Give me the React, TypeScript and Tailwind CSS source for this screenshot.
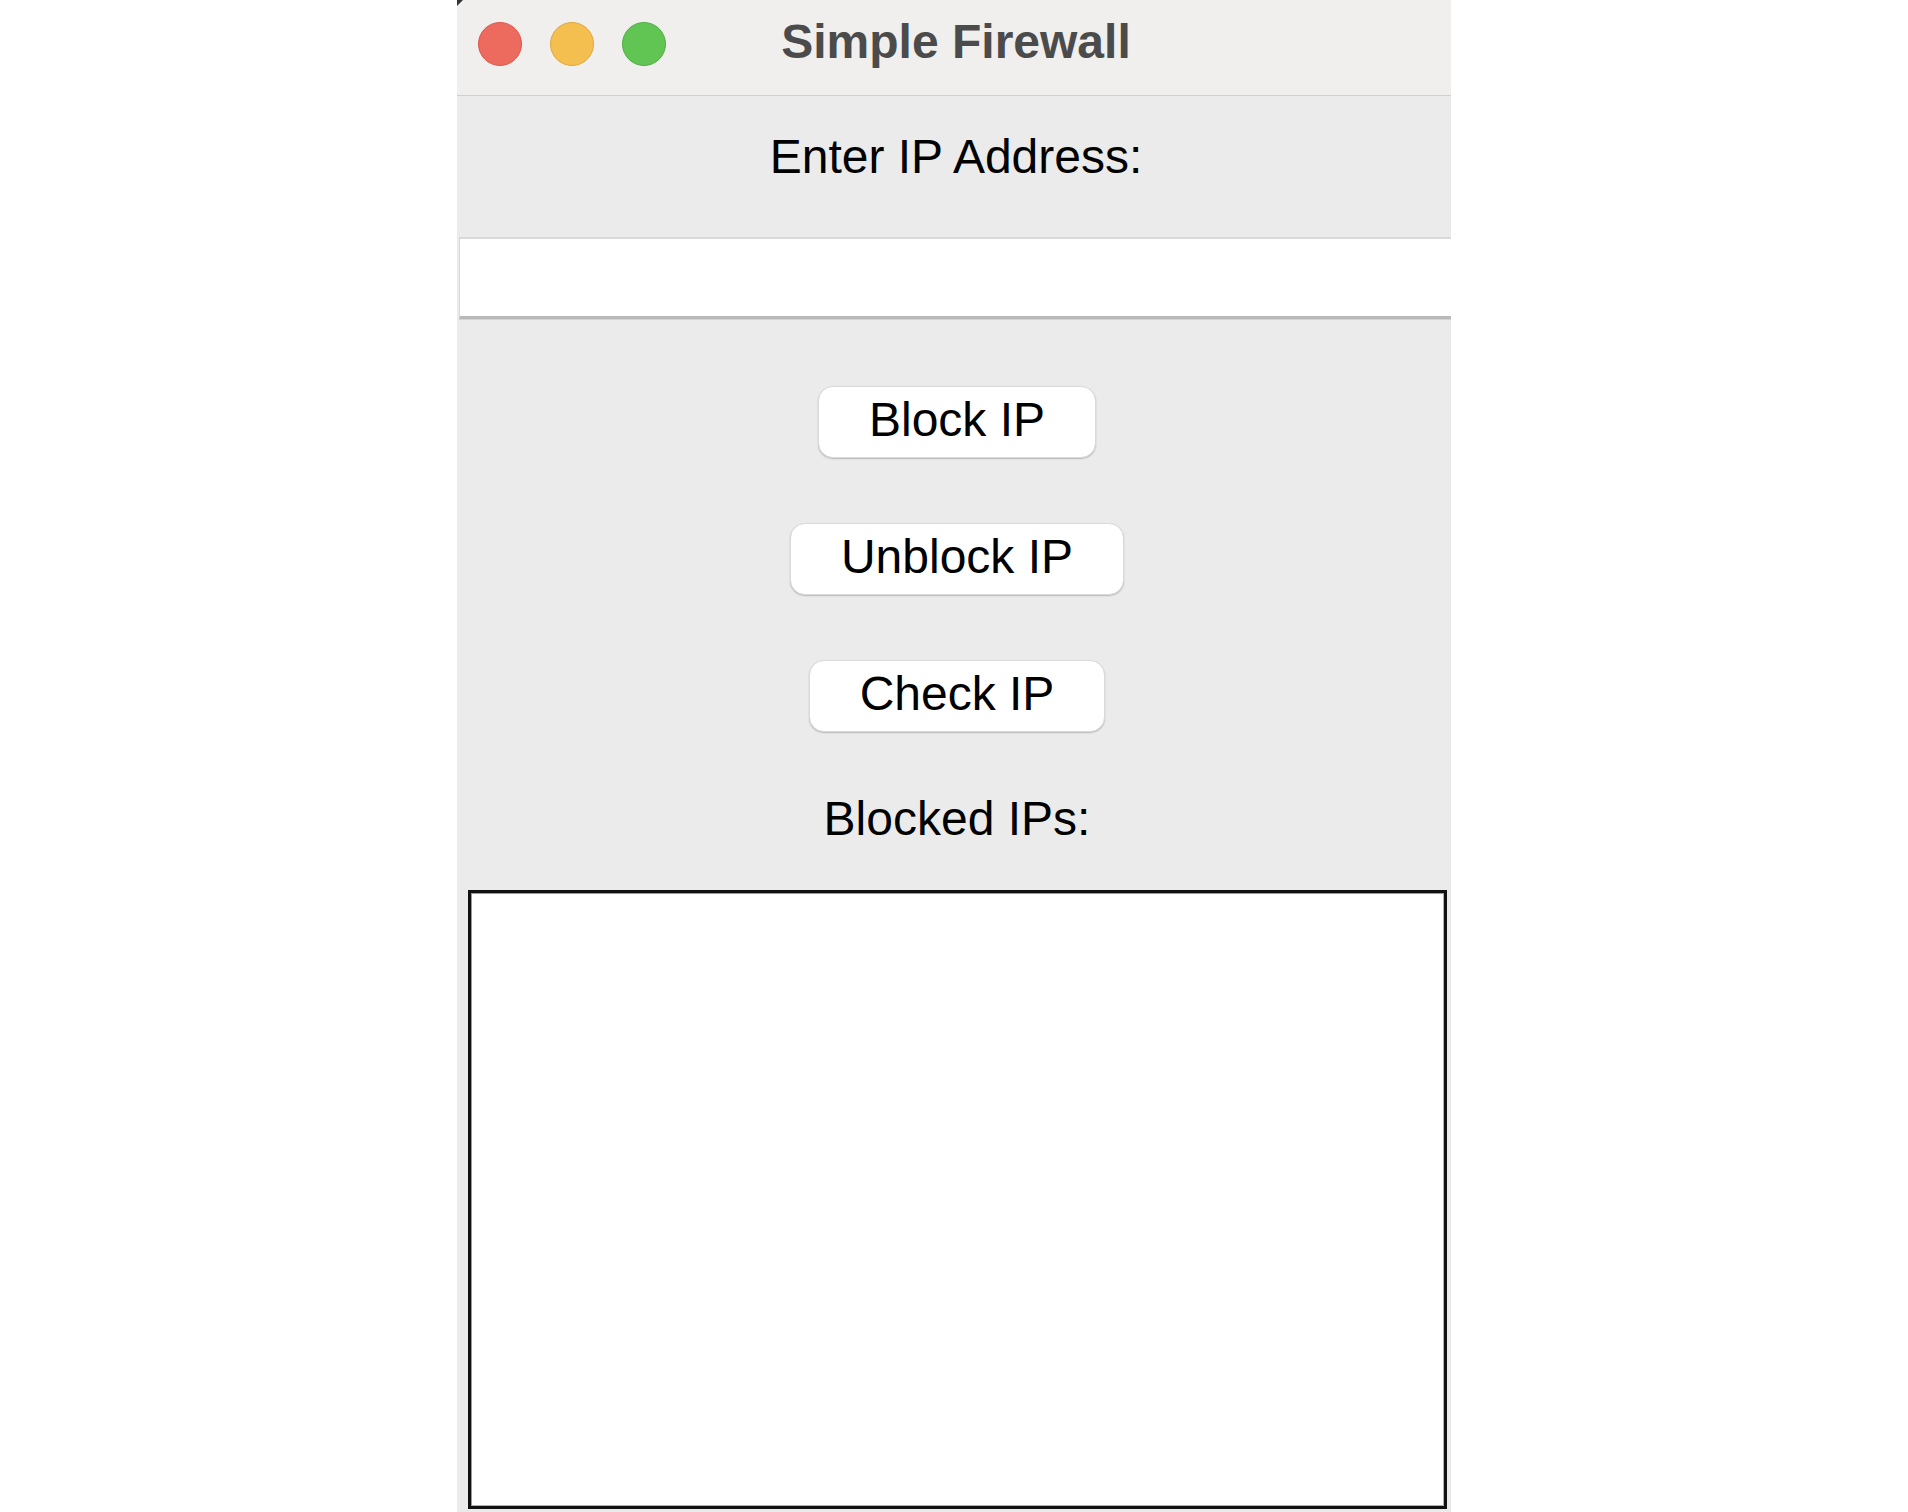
import React from "react";

const font = { fontFamily: '"Liberation Sans", Arial, Helvetica, sans-serif' };

function Btn({ label }: { label: string }) {
  return (
    <button
      className="self-center bg-white rounded-[15px] px-[50px] pt-[6px] pb-[10px] text-[48px] leading-[54px] text-black border border-[#dadada] shadow-[0_1px_1.5px_rgba(0,0,0,0.22)]"
      style={font}
    >
      {label}
    </button>
  );
}

export default function App() {
  return (
    <div className="w-full h-[1512px] bg-white flex overflow-hidden" style={font}>
      <div className="ml-[457px] w-[994px] h-[1512px] bg-[#ebebeb] flex flex-col relative">
        <div className="absolute left-0 top-0 w-0 h-0 border-t-[6px] border-r-[6px] border-t-[#333] border-r-transparent" />
        {/* Title bar */}
        <div className="h-[96px] bg-[#f0efed] border-b border-[#cfcfcf] grid grid-cols-[1fr_auto_1fr] items-start">
          <div className="flex gap-[28px] pl-[21px] pt-[22px]">
            <div className="w-[44px] h-[44px] rounded-full bg-[#ed6a5e] border border-[#d9574c]" />
            <div className="w-[44px] h-[44px] rounded-full bg-[#f5bf4f] border border-[#dea73c]" />
            <div className="w-[44px] h-[44px] rounded-full bg-[#61c554] border border-[#4fae43]" />
          </div>
          <div className="pt-[15px] pl-[4px] text-[48px] leading-[54px] font-bold text-[#4b4b4b]">
            Simple Firewall
          </div>
          <div />
        </div>

        {/* Body */}
        <div className="flex flex-col pl-[4px]">
          <div className="mt-[34px] h-[54px] text-center text-[48px] leading-[54px] text-black">
            Enter IP Address:
          </div>
        </div>
        <div className="mt-[53px] ml-[2px] h-[82px] bg-white border-t-2 border-l border-[#d9d9d9] border-b-[3px] border-b-[#b9b9b9] shadow-[0_1px_0_#d4d4d4]" />
        <div className="flex flex-col pl-[6px]">
          <div className="mt-[67px] flex justify-center">
            <Btn label="Block IP" />
          </div>
          <div className="mt-[65px] flex justify-center">
            <Btn label="Unblock IP" />
          </div>
          <div className="mt-[65px] flex justify-center">
            <Btn label="Check IP" />
          </div>
          <div className="mt-[60px] h-[54px] text-center text-[48px] leading-[54px] text-black">
            Blocked IPs:
          </div>
        </div>
        <div className="mt-[44px] ml-[11px] mr-[4px] h-[619px] bg-white border-[3px] border-[#111] shadow-[inset_1px_1px_0_#9a9a9a,inset_-1px_-1px_0_#b0b0b0]" />
      </div>
    </div>
  );
}
